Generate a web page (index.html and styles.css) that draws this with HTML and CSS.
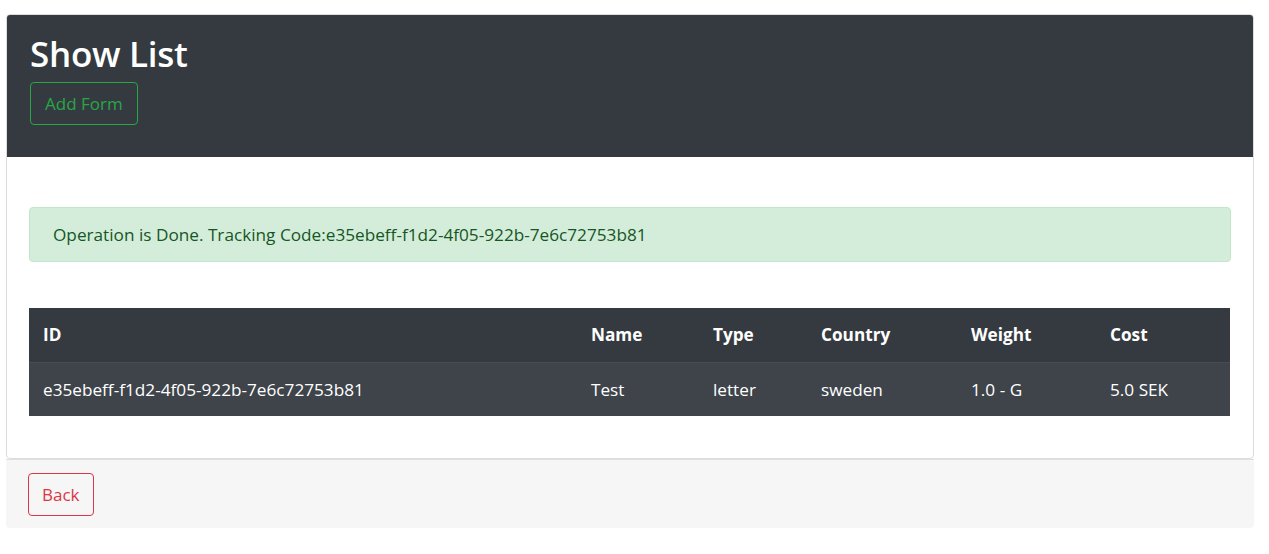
FILE: index.html
```html
<!DOCTYPE html>
<html lang="en">
<head>
<meta charset="utf-8">
<title>Show List</title>
<link rel="stylesheet" href="styles.css">
</head>
<body>
<div class="page">
  <div class="card">
    <div class="card-header">
      <h1 class="title">Show List</h1>
      <a class="btn btn-success-outline" href="#">Add Form</a>
    </div>
    <div class="card-body">
      <div class="alert">Operation is Done. Tracking Code:e35ebeff-f1d2-4f05-922b-7e6c72753b81</div>
      <table class="table">
        <thead>
          <tr>
            <th class="c-id">ID</th>
            <th class="c-name">Name</th>
            <th class="c-type">Type</th>
            <th class="c-country">Country</th>
            <th class="c-weight">Weight</th>
            <th class="c-cost">Cost</th>
          </tr>
        </thead>
        <tbody>
          <tr>
            <td>e35ebeff-f1d2-4f05-922b-7e6c72753b81</td>
            <td>Test</td>
            <td>letter</td>
            <td>sweden</td>
            <td>1.0 - G</td>
            <td>5.0 SEK</td>
          </tr>
        </tbody>
      </table>
    </div>
  </div>
  <div class="footer">
    <a class="btn btn-danger-outline" href="#">Back</a>
  </div>
</div>
</body>
</html>
```
FILE: styles.css
```css
* { box-sizing: border-box; }
html, body { margin: 0; padding: 0; background: #fff; }
body {
  font-family: "Open Sans", "Noto Sans", "Liberation Sans", sans-serif;
  color: #212529;
}
.page {
  width: 1248px;
  margin: 14px 0 0 6px;
}
.card {
  border: 1px solid #dcdcdc;
  border-radius: 4px;
  background: #fff;
}
.card-header {
  background: #343a40;
  border-radius: 3px 3px 0 0;
  padding: 17px 23px 31px;
  height: 142px;
}
.title {
  margin: 0 0 6px;
  color: #fff;
  font-size: 35px;
  font-weight: 600;
  line-height: 44px;
  letter-spacing: -0.3px;
}
.btn {
  display: inline-block;
  text-decoration: none;
  border: 1px solid;
  border-radius: 4px;
  font-size: 17px;
  line-height: 27px;
  padding: 7px 14px;
  background: transparent;
}
.btn-success-outline { color: #28a745; border-color: #28a745; }
.btn-danger-outline { color: #dc3545; border-color: #dc3545; padding: 7px 13px; }
.card-body {
  padding: 50px 22px 42px;
}
.alert {
  background: #d4edda;
  border: 1px solid #c3e6cb;
  color: #155724;
  border-radius: 4px;
  height: 55px;
  padding: 0 23px;
  display: flex;
  align-items: center;
  font-size: 17.2px;
  margin-bottom: 46px;
}
.table {
  width: 1201px;
  border-collapse: collapse;
  table-layout: fixed;
  color: #fff;
  font-size: 17.2px;
}
.table th, .table td {
  text-align: left;
  padding: 0 14px;
  height: 54px;
  vertical-align: middle;
}
.table th { font-weight: 700; background: #343a40; }
.table td { background: #3e444a; border-top: 1px solid #454d55; }
.c-id { width: 548px; }
.c-name { width: 122px; }
.c-type { width: 108px; }
.c-country { width: 150px; }
.c-weight { width: 139px; }
.c-cost { width: 134px; }
.footer {
  background: #f6f6f6;
  border-top: 1px solid #e0e0e0;
  border-radius: 0 0 4px 4px;
  height: 69px;
  padding: 13px 22px;
}
```
